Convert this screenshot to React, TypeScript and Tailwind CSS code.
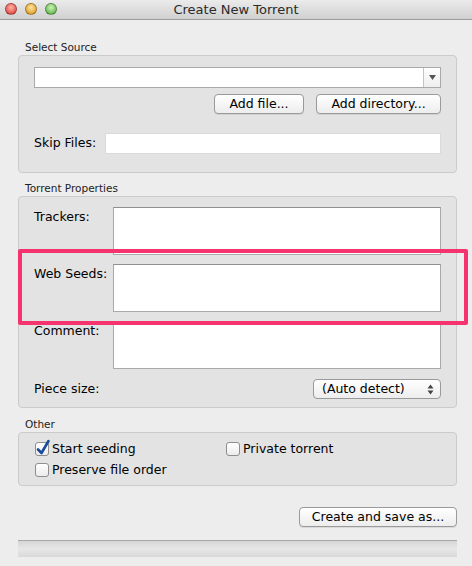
import React from "react";

const font = { fontFamily: '"DejaVu Sans", "Liberation Sans", sans-serif' };

function Light({ from, to }: { from: string; to: string }) {
  return (
    <span
      className="block h-[12px] w-[12px] rounded-full border border-black/30"
      style={{ background: `radial-gradient(circle at 50% 35%, ${from}, ${to})` }}
    />
  );
}

function Button({ label, className = "" }: { label: string; className?: string }) {
  return (
    <button
      className={
        "flex h-[20px] items-center justify-center rounded-[4px] border border-[#9a9a9a] bg-gradient-to-b from-white to-[#ededed] text-[12.5px] text-black shadow-[0_1px_0_rgba(0,0,0,0.08)] " +
        className
      }
    >
      {label}
    </button>
  );
}

function Check({ checked = false }: { checked?: boolean }) {
  return (
    <span className="relative block h-[14px] w-[14px] shrink-0 rounded-[3px] border border-[#8e8e8e] bg-gradient-to-b from-white to-[#ececec]">
      {checked && (
        <svg className="absolute -left-[1px] -top-[4px]" width="16" height="18" viewBox="0 0 16 18">
          <path d="M3 10.5 L6.5 14 L13.5 2" fill="none" stroke="#1b4a9a" strokeWidth="2.6" strokeLinecap="round" strokeLinejoin="round" />
        </svg>
      )}
    </span>
  );
}

function Group({ title, children, className = "" }: { title: string; children: React.ReactNode; className?: string }) {
  return (
    <div>
      <div className="pl-[7px] text-[10.5px] leading-[14px] text-[#222]">{title}</div>
      <div className={"mt-[1px] rounded-[4px] border border-[#cbcbcb] bg-[#e3e3e3] " + className}>{children}</div>
    </div>
  );
}

function Area({ className = "" }: { className?: string }) {
  return <div className={"relative h-[48px] flex-1 border border-[#a9a9a9] border-t-[#8f8f8f] bg-white " + className} />;
}

export default function App() {
  return (
    <div className="relative h-[566px] w-[472px] overflow-hidden bg-[#ededed] text-black" style={font}>
      {/* title bar */}
      <div className="relative flex h-[20px] items-center border-b border-[#9c9c9c] bg-gradient-to-b from-[#ebebeb] to-[#d0d0d0]">
        <div className="absolute left-[5px] top-[3px] flex gap-[8px]">
          <Light from="#ffb3a8" to="#d8332a" />
          <Light from="#ffe3a0" to="#d9900f" />
          <Light from="#cdf3b4" to="#4ba93a" />
        </div>
        <div className="w-full text-center text-[13px] leading-[20px] text-[#2a2a2a]">Create New Torrent</div>
      </div>

      <div className="pl-[18px] pr-[15px]">
        {/* Select Source */}
        <div className="pt-[20px]">
          <Group title="Select Source" className="h-[118px] px-[15px] pt-[11px]">
            <div className="flex h-[21px] border border-[#a9a9a9] bg-white">
              <div className="flex-1" />
              <div className="flex w-[17px] items-center justify-center border-l border-[#c4c4c4] bg-gradient-to-b from-white to-[#eeeeee]">
                <svg width="7" height="5" viewBox="0 0 7 5">
                  <path d="M0 0 H7 L3.5 5 Z" fill="#555" />
                </svg>
              </div>
            </div>
            <div className="mt-[6px] flex justify-end gap-[12px]">
              <Button label="Add file..." className="w-[90px]" />
              <Button label="Add directory..." className="w-[125px]" />
            </div>
            <div className="mt-[19px] flex items-center">
              <div className="w-[71px] text-[12.5px]">Skip Files:</div>
              <div className="h-[21px] flex-1 border border-[#dadada] bg-white" />
            </div>
          </Group>
        </div>

        {/* Torrent Properties */}
        <div className="pt-[8px]">
          <Group title="Torrent Properties" className="h-[212px] px-[15px] pt-[10px]">
            <div className="flex">
              <div className="w-[79px] pt-[1px] text-[12.5px]">Trackers:</div>
              <Area>
                <span className="absolute left-[5px] top-[2px] h-[14px] w-px bg-black" />
              </Area>
            </div>
            <div className="mt-[9px] flex">
              <div className="w-[79px] pt-[1px] text-[12.5px]">Web Seeds:</div>
              <Area />
            </div>
            <div className="mt-[9px] flex">
              <div className="w-[79px] pt-[1px] text-[12.5px]">Comment:</div>
              <Area />
            </div>
            <div className="mt-[10px] flex items-center justify-between">
              <div className="text-[12.5px]">Piece size:</div>
              <div className="flex h-[20px] w-[128px] items-center justify-between rounded-[4px] border border-[#9a9a9a] bg-gradient-to-b from-white to-[#ededed] pl-[8px] pr-[6px] text-[12.5px]">
                <span>(Auto detect)</span>
                <svg width="7" height="11" viewBox="0 0 7 11">
                  <path d="M0.5 4.5 L3.5 0.5 L6.5 4.5 Z M0.5 6.5 L3.5 10.5 L6.5 6.5 Z" fill="#444" />
                </svg>
              </div>
            </div>
          </Group>
        </div>

        {/* Other */}
        <div className="pt-[9px]">
          <Group title="Other" className="h-[54px] pl-[16px] pt-[8px]">
            <div className="flex items-center">
              <div className="flex w-[191px] items-center gap-[3px]">
                <Check checked />
                <span className="text-[12.5px] leading-[15px]">Start seeding</span>
              </div>
              <div className="flex items-center gap-[3px]">
                <Check />
                <span className="text-[12.5px] leading-[15px]">Private torrent</span>
              </div>
            </div>
            <div className="mt-[6px] flex items-center gap-[3px]">
              <Check />
              <span className="text-[12.5px] leading-[15px]">Preserve file order</span>
            </div>
          </Group>
        </div>

        <div className="mt-[21px] flex justify-end">
          <Button label="Create and save as..." className="w-[158px]" />
        </div>

        {/* progress */}
        <div className="mt-[13px] h-[17px] border-t border-[#a7a7a7] bg-gradient-to-b from-[#d6d6d6] via-[#e7e7e7] to-[#d9d9d9]" />
      </div>

      {/* annotation highlight */}
      <div className="absolute left-[18px] top-[249px] h-[76px] w-[450px] rounded-[2px] border-[4px] border-[#f5336f]" />
    </div>
  );
}
